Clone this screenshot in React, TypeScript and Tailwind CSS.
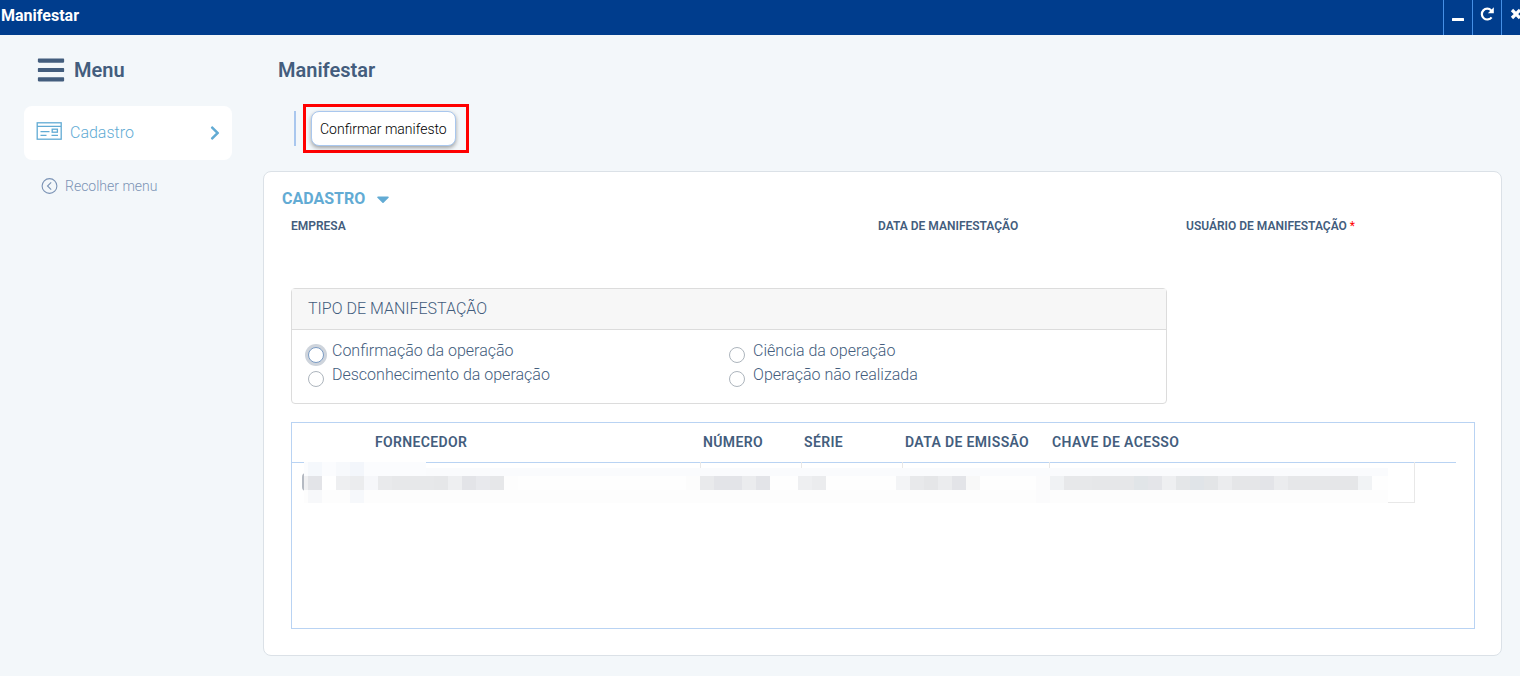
import { useState } from "react";
import type { ReactNode } from "react";
import { FaBars, FaCaretDown, FaChevronRight } from "react-icons/fa";

const OPTIONS = [
  "Confirmação da operação",
  "Ciência da operação",
  "Desconhecimento da operação",
  "Operação não realizada",
];

// x, y, width, height, colour of every tile in the masked row
const TILES: [number, number, number, number, string][] = [
  [0, 0, 122, 14, "#fbfcfe"],
  [4, 0, 14, 14, "#f5f8fc"],
  [32, 0, 28, 14, "#f7f9fc"],
  [46, 0, 14, 14, "#f3f6fb"],
  [122, 6, 962, 8, "#fafbfd"],
  [0, 14, 1084, 14, "#fefefe"],
  [0, 28, 1084, 13, "#fdfdfd"],
  [4, 28, 14, 13, "#f7f8fa"],
  [46, 28, 14, 13, "#f6f8fb"],
  [0, 14, 4, 14, "#f0f0f2"],
  [4, 14, 14, 14, "#e3e4e8"],
  [18, 14, 14, 14, "#ffffff"],
  [32, 14, 14, 14, "#eeeff1"],
  [46, 14, 14, 14, "#ebecee"],
  [60, 14, 14, 14, "#f6f7fa"],
  [74, 14, 14, 14, "#e9eaec"],
  [88, 14, 42, 14, "#e7e8ea"],
  [130, 14, 14, 14, "#e6e7e9"],
  [144, 14, 14, 14, "#eeeff1"],
  [158, 14, 14, 14, "#e3e4e8"],
  [172, 14, 28, 14, "#e8e9ed"],
  [382, 14, 14, 14, "#fcfcfc"],
  [396, 14, 14, 14, "#e9eaec"],
  [410, 14, 28, 14, "#e3e4e8"],
  [438, 14, 14, 14, "#ebecee"],
  [452, 14, 14, 14, "#e3e4e8"],
  [494, 14, 14, 14, "#eeeff1"],
  [508, 14, 14, 14, "#ebecee"],
  [592, 14, 14, 14, "#f3f4f6"],
  [606, 14, 14, 14, "#e8e9eb"],
  [620, 14, 14, 14, "#e5e6e8"],
  [634, 14, 14, 14, "#ebecee"],
  [648, 14, 14, 14, "#e3e4e8"],
  [662, 14, 14, 14, "#f8f8f8"],
  [732, 14, 14, 27, "#fbfbfc"],
  [746, 14, 14, 14, "#f0f2f4"],
  [760, 14, 28, 14, "#e7e8ea"],
  [788, 14, 42, 14, "#e6e7e9"],
  [830, 14, 14, 14, "#e1e5e8"],
  [844, 14, 14, 14, "#e4e5e9"],
  [858, 14, 14, 14, "#eeeff1"],
  [872, 14, 14, 14, "#e4e6e8"],
  [886, 14, 14, 14, "#e0e4e8"],
  [900, 14, 14, 14, "#e3e5e7"],
  [914, 14, 14, 14, "#ebecee"],
  [928, 14, 28, 14, "#e5e6e8"],
  [956, 14, 14, 14, "#e3e4e8"],
  [970, 14, 14, 14, "#ebecee"],
  [984, 14, 42, 14, "#e6e7e9"],
  [1026, 14, 28, 14, "#e5e6e8"],
  [1054, 14, 14, 14, "#f1f3f5"],
  [200, 14, 14, 14, "#fdfdfd"],
  [186, 14, 14, 14, "#e6e7e9"],
];

function WindowButton({ label, children }: { label: string; children?: ReactNode }) {
  return (
    <button
      type="button"
      aria-label={label}
      className="flex w-[29px] justify-center border-l border-[#4690e6] pt-[7px]"
    >
      {children}
    </button>
  );
}

function TitleBar() {
  return (
    <header className="flex h-[35px] justify-between overflow-hidden bg-[#003d8d] text-white">
      <h1 className="px-px pt-1 text-base leading-6 font-bold">Manifestar</h1>
      <div className="-mr-[10px] flex">
        <WindowButton label="Minimizar">
          <svg viewBox="0 0 14 14" className="size-[14px]" fill="currentColor">
            <rect x="1" y="11" width="12" height="3" rx="0.5" />
          </svg>
        </WindowButton>
        <WindowButton label="Atualizar">
          <svg viewBox="0 0 14 14" className="size-[14px]" fill="none" stroke="currentColor" strokeWidth="2.2">
            <path d="M11.6 10.3a5.4 5.4 0 1 1-.4-6.9" />
            <path d="M13.8.2v6H7.8z" fill="currentColor" stroke="none" />
          </svg>
        </WindowButton>
        <WindowButton label="Fechar">
          <svg viewBox="0 0 14 14" className="size-[14px]" fill="none" stroke="currentColor" strokeWidth="3.2">
            <path d="M3 3l8 8M11 3l-8 8" />
          </svg>
        </WindowButton>
      </div>
    </header>
  );
}

function Sidebar() {
  return (
    <aside className="w-[263px] shrink-0 pr-[31px] pl-6">
      <div className="mb-0.5 flex h-[69px] items-center gap-2 pl-3">
        <FaBars className="size-[30px]" />
        <h2 className="text-xl font-semibold">Menu</h2>
      </div>
      <a href="#cadastro" className="flex h-[54px] items-center rounded-lg bg-white pr-[9px] pl-3 text-[#62abd4]">
        <svg viewBox="0 0 26 22" className="mr-2 h-[22px] w-[26px]" fill="none" stroke="currentColor" strokeWidth="1.3">
          <rect x="1.2" y="0.8" width="24" height="16.4" />
          <path d="M1 4.4h24M4.5 9.6h9M4.5 13.4h6M15.5 13.4h6.5" />
          <rect x="16.2" y="7.2" width="5.2" height="3" />
        </svg>
        <span className="text-base">Cadastro</span>
        <FaChevronRight className="ml-auto size-4" />
      </a>
      <button type="button" className="mt-4 flex h-5 items-center gap-[7px] pl-[17px] text-sm text-[#7b93b5]">
        <svg viewBox="0 0 17 17" className="size-[17px]" fill="none" stroke="currentColor" strokeWidth="1.1">
          <circle cx="8.5" cy="8" r="7.4" />
          <path d="M10.2 4.3L6.5 8l3.7 3.7" />
        </svg>
        Recolher menu
      </button>
    </aside>
  );
}

function Field({ id, label, required }: { id: string; label: string; required?: boolean }) {
  return (
    <div>
      <label htmlFor={id} className="block text-xs leading-5 font-semibold">
        {label} {required && <span className="font-normal text-[#ff0000]">*</span>}
      </label>
      <input id={id} readOnly className="h-8 w-full bg-transparent outline-none" />
    </div>
  );
}

function TypeGroup() {
  const [selected, setSelected] = useState("");

  return (
    <section className="mt-5 w-[74%] rounded-sm border border-[#dcdcdc]">
      <h4 className="border-b border-[#dcdcdc] bg-[#f7f7f7] px-4 py-2 text-base">TIPO DE MANIFESTAÇÃO</h4>
      <div className="grid grid-cols-2 px-4 pt-[9px] pb-4">
        {OPTIONS.map((option, index) => (
          <label key={option} className="flex h-6 gap-2 text-base">
            <input
              type="radio"
              name="tipo"
              checked={selected === option}
              onChange={() => setSelected(option)}
              className={
                "mt-2 size-4 shrink-0 appearance-none rounded-full border bg-white checked:border-4 " +
                (index === 0 ? "border-[#7b9cc4] ring-3 ring-[#ced4dc]" : "border-[#adb5bd]")
              }
            />
            {option}
          </label>
        ))}
      </div>
    </section>
  );
}

function InvoiceTable() {
  return (
    <div className="relative mt-[18px] h-[207px] border border-[#b9d3f3] pr-[18px]">
      <table className="w-full table-fixed border-collapse text-left">
        <colgroup>
          <col className="w-[80px]" />
          <col className="w-[328px]" />
          <col className="w-[101px]" />
          <col className="w-[101px]" />
          <col className="w-[147px]" />
          <col className="w-[365px]" />
          <col />
        </colgroup>
        <thead>
          <tr className="h-[39px] border-b border-[#b9d3f3] text-sm">
            <th aria-label="Seleção" />
            <th className="px-[3px] font-semibold tracking-wide">FORNECEDOR</th>
            <th className="px-[3px] font-semibold tracking-wide">NÚMERO</th>
            <th className="px-[3px] font-semibold tracking-wide">SÉRIE</th>
            <th className="px-[3px] font-semibold tracking-wide">DATA DE EMISSÃO</th>
            <th className="px-[3px] font-semibold tracking-wide" colSpan={2}>CHAVE DE ACESSO</th>
          </tr>
        </thead>
        <tbody>
          <tr className="h-10">
            <td className="pl-[10px]">
              <input type="checkbox" aria-label="Selecionar nota" className="block size-[18px] appearance-none rounded-sm border-2 border-[#b4b9c2]" />
            </td>
            <td className="border-r border-[#e8e8e8]" />
            <td className="border-r border-[#e8e8e8]" />
            <td className="border-r border-[#e8e8e8]" />
            <td className="border-r border-[#e8e8e8]" />
            <td className="border-r border-b border-[#e8e8e8]" />
            <td />
          </tr>
        </tbody>
      </table>
      <svg viewBox="0 0 1084 41" className="absolute top-[39px] left-3 w-[1084px]" shapeRendering="crispEdges" aria-hidden="true">
        {TILES.map(([x, y, width, height, fill], index) => (
          <rect key={index} x={x} y={y} width={width} height={height} fill={fill} />
        ))}
      </svg>
    </div>
  );
}

export default function App() {
  return (
    <div className="min-h-screen bg-[#f3f7fa] font-['Roboto','Liberation_Sans',sans-serif] font-light text-[#435d7d]">
      <TitleBar />
      <div className="flex">
        <Sidebar />
        <main className="min-w-0 flex-1 pr-[18px] pb-5">
          <h2 className="px-[15px] pt-5 text-xl leading-[30px] font-semibold">Manifestar</h2>

          <div className="mt-[19px] flex items-center pl-[31px]">
            <span className="mr-[7px] h-[35px] w-0.5 bg-[#a9c7ee]" />
            <div className="border-3 border-[#ff0000] py-1 pr-[10px] pl-[5px]">
              <button
                type="button"
                className="block h-[35px] rounded-lg border border-[#a9c7ee] bg-white px-2 text-sm text-black shadow-[0_2px_4px_rgba(0,0,0,0.35)]"
              >
                Confirmar manifesto
              </button>
            </div>
          </div>

          <section id="cadastro" className="mt-[18px] rounded-lg border border-[#dbe1e7] bg-white pt-4 pr-[26px] pb-[26px] pl-[27px]">
            <h3 className="-ml-[9px] flex items-center gap-2 text-base leading-[22px] font-bold text-[#62abd4]">
              CADASTRO
              <FaCaretDown className="size-5" />
            </h3>
            <div className="mt-1.5 grid grid-cols-[587fr_308fr_289fr]">
              <Field id="empresa" label="EMPRESA" />
              <Field id="data" label="DATA DE MANIFESTAÇÃO" />
              <Field id="usuario" label="USUÁRIO DE MANIFESTAÇÃO" required />
            </div>
            <TypeGroup />
            <InvoiceTable />
          </section>
        </main>
      </div>
    </div>
  );
}
